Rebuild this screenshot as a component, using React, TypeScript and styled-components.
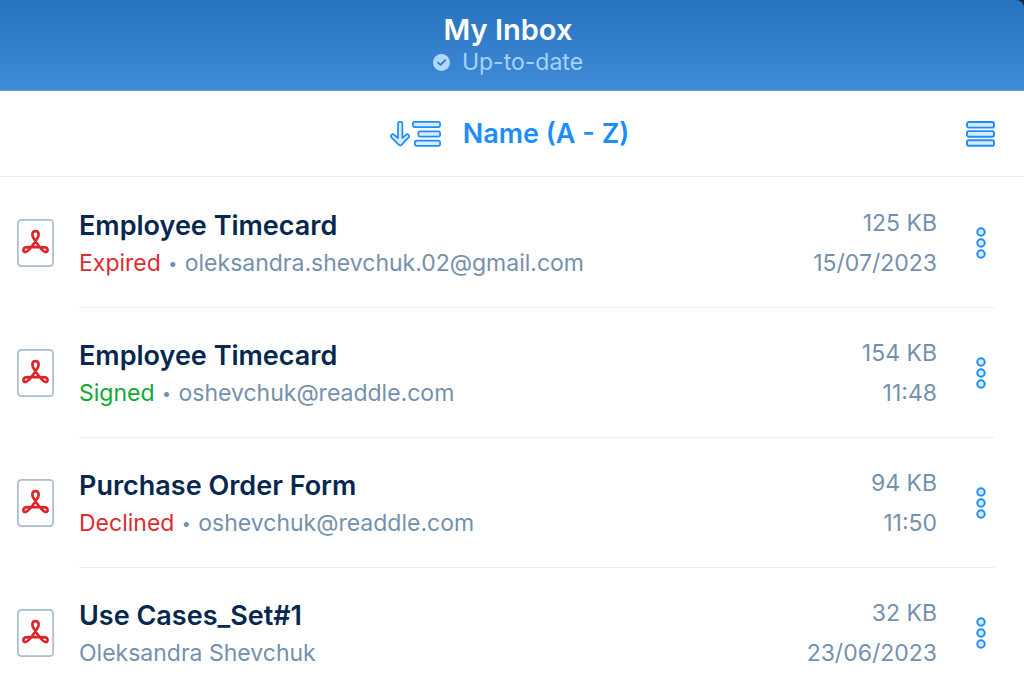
import React from "react";
import styled, { createGlobalStyle } from "styled-components";

const GlobalStyle = createGlobalStyle`
  *, *::before, *::after { box-sizing: border-box; }
  body {
    margin: 0;
    background: #ffffff;
    font-family: Inter, "Liberation Sans", sans-serif;
    color: #06284f;
  }
`;

const Page = styled.div`
  height: 100vh;
  overflow: hidden;
`;

const HeaderBackdrop = styled.div`
  background: #1c2733;
`;

const Header = styled.header`
  display: flex;
  flex-direction: column;
  align-items: center;
  height: 91px;
  padding: 11px 8px 0 0;
  border-bottom: 1px solid #6a9ed6;
  border-top-right-radius: 8px;
  background: linear-gradient(#2673c0, #408bd8);
`;

const Heading = styled.h1`
  margin: 0;
  font-size: 29px;
  line-height: 37px;
  font-weight: 600;
  color: #ffffff;
`;

const SyncStatus = styled.div`
  display: flex;
  align-items: center;
  gap: 12px;
  font-size: 23px;
  line-height: 28px;
  color: #a5d2fb;
`;

const Toolbar = styled.div`
  display: grid;
  grid-template-columns: 1fr auto 1fr;
  align-items: center;
  height: 86px;
  padding: 0 29px 0 24px;
  border-bottom: 1px solid #e6edf3;
`;

const PlainButton = styled.button`
  display: flex;
  align-items: center;
  padding: 0;
  border: 0;
  background: none;
  font: inherit;
  color: #1c8efc;
  cursor: pointer;
`;

const SortButton = styled(PlainButton)`
  grid-column: 2;
  gap: 22px;
  font-size: 27px;
  line-height: 34px;
  font-weight: 600;
`;

const ViewButton = styled(PlainButton)`
  justify-self: end;
`;

const FileList = styled.ul`
  margin: 0;
  padding: 1px 0 0;
  list-style: none;
`;

const FileRow = styled.li`
  display: flex;
  padding: 0 29px 0 17px;
  gap: 25px;
  align-items: center;
`;

const RowBody = styled.div`
  display: flex;
  flex: 1;
  min-width: 0;
  height: 130px;
  justify-content: space-between;
  align-items: center;
  border-bottom: 1px solid #e9eff4;
`;

const FileText = styled.div`
  flex: 1;
  min-width: 0;
  padding-top: 2px;
`;

const FileName = styled.h2`
  margin: 0;
  font-size: 27px;
  line-height: 38px;
  font-weight: 600;
`;

const FileDetail = styled.p`
  margin: 0;
  font-size: 23px;
  line-height: 36px;
  color: #7590ae;
  white-space: nowrap;
`;

const State = styled.span<{ $color: string }>`
  color: ${(p) => p.$color};
`;

const Bullet = styled.span`
  margin: 0 1px;
  font-size: 16px;
  line-height: 1;
  vertical-align: 2px;
`;

const Meta = styled.div`
  font-size: 23px;
  line-height: 40px;
  color: #7590ae;
  text-align: right;
`;

const MoreButton = styled(PlainButton)`
  justify-content: flex-end;
  width: 58px;
  padding-right: 9px;
`;

const CheckIcon = () => (
  <svg width="17" height="17" viewBox="0 0 17 17" aria-hidden="true">
    <circle cx="8.5" cy="8.5" r="8.5" fill="#b0d9ff" />
    <path d="M5 8.6l2.6 2.3 4.6-4.7" fill="none" stroke="#317ccb" strokeWidth="1.9" strokeLinecap="round" strokeLinejoin="round" />
  </svg>
);

const SortIcon = () => (
  <svg width="51" height="26" viewBox="0 0 51 26" fill="#d9eafc" stroke="#1c8efc" strokeWidth="1.7" strokeLinejoin="round" aria-hidden="true">
    <path d="M8 2.8a2.2 2.2 0 0 1 4.4 0V17l3.4-3.2c1.8-1.6 4.5.8 2.8 2.6l-6.8 7.2c-1 1-2.2 1-3.2 0L1.5 16.4c-1.6-1.8.9-4.2 2.7-2.6L8 17Z" />
    <rect x="22.9" y="0.9" width="27.2" height="5.2" rx="1.8" />
    <rect x="28.4" y="10.4" width="21.7" height="5.2" rx="1.8" />
    <rect x="24.9" y="19.7" width="25.2" height="5.2" rx="1.8" />
  </svg>
);

const ListIcon = () => (
  <svg width="29" height="26" viewBox="0 0 29 26" fill="#d9eafc" stroke="#1c8efc" strokeWidth="1.9" aria-hidden="true">
    <rect x="1" y="1" width="27" height="5.6" rx="1.9" />
    <rect x="1" y="10.1" width="27" height="5.6" rx="1.9" />
    <rect x="1" y="19.2" width="27" height="5.6" rx="1.9" />
  </svg>
);

const PdfIcon = () => (
  <svg width="37" height="48" viewBox="0 0 37 48" fill="none" role="img" aria-label="PDF">
    <rect x="0.9" y="0.9" width="35.2" height="46.2" rx="3.6" stroke="#a9bcd2" strokeWidth="1.7" />
    <path
      d="M18.5 12.2C14.8 12.2 14.8 16 16.4 18.9C18.2 22 20.6 25.5 23 28.5C25.5 31.6 27.5 33.1 29 33.1C31.4 32.9 31 29 28.6 28.4C26 27.8 22 28.2 18.5 28.2C15 28.2 11 27.8 8.4 28.4C6 29 5.6 32.9 8 33.1C9.5 33.1 11.5 31.6 14 28.5C16.4 25.5 18.8 22 20.6 18.9C22.2 16 22.2 12.2 18.5 12.2Z"
      stroke="#dc262b"
      strokeWidth="2.7"
      strokeLinejoin="round"
    />
  </svg>
);

const DotsIcon = () => (
  <svg width="10" height="32" viewBox="0 0 10 32" fill="#d9eafc" stroke="#1c8efc" strokeWidth="2" aria-hidden="true">
    <circle cx="5" cy="5" r="3.7" />
    <circle cx="5" cy="16" r="3.7" />
    <circle cx="5" cy="27" r="3.7" />
  </svg>
);

interface InboxFile {
  name: string;
  from: string;
  size: string;
  date: string;
  state?: { label: string; color: string };
}

const files: InboxFile[] = [
  { name: "Employee Timecard", from: "oleksandra.shevchuk.02@gmail.com", size: "125 KB", date: "15/07/2023", state: { label: "Expired", color: "#dc2d33" } },
  { name: "Employee Timecard", from: "oshevchuk@readdle.com", size: "154 KB", date: "11:48", state: { label: "Signed", color: "#10aa35" } },
  { name: "Purchase Order Form", from: "oshevchuk@readdle.com", size: "94 KB", date: "11:50", state: { label: "Declined", color: "#dc2d33" } },
  { name: "Use Cases_Set#1", from: "Oleksandra Shevchuk", size: "32 KB", date: "23/06/2023" },
];

export default function App() {
  return (
    <Page>
      <GlobalStyle />
      <HeaderBackdrop>
        <Header>
          <Heading>My Inbox</Heading>
          <SyncStatus>
            <CheckIcon />
            Up-to-date
          </SyncStatus>
        </Header>
      </HeaderBackdrop>
      <Toolbar>
        <SortButton type="button">
          <SortIcon />
          Name (A - Z)
        </SortButton>
        <ViewButton type="button" aria-label="List view">
          <ListIcon />
        </ViewButton>
      </Toolbar>
      <FileList>
        {files.map((file, i) => (
          <FileRow key={i}>
            <PdfIcon />
            <RowBody>
              <FileText>
                <FileName>{file.name}</FileName>
                <FileDetail>
                  {file.state && (
                    <>
                      <State $color={file.state.color}>{file.state.label}</State>{" "}
                      <Bullet>•</Bullet>{" "}
                    </>
                  )}
                  {file.from}
                </FileDetail>
              </FileText>
              <Meta>
                <div>{file.size}</div>
                <div>{file.date}</div>
              </Meta>
              <MoreButton type="button" aria-label={"More actions for " + file.name}>
                <DotsIcon />
              </MoreButton>
            </RowBody>
          </FileRow>
        ))}
      </FileList>
    </Page>
  );
}
